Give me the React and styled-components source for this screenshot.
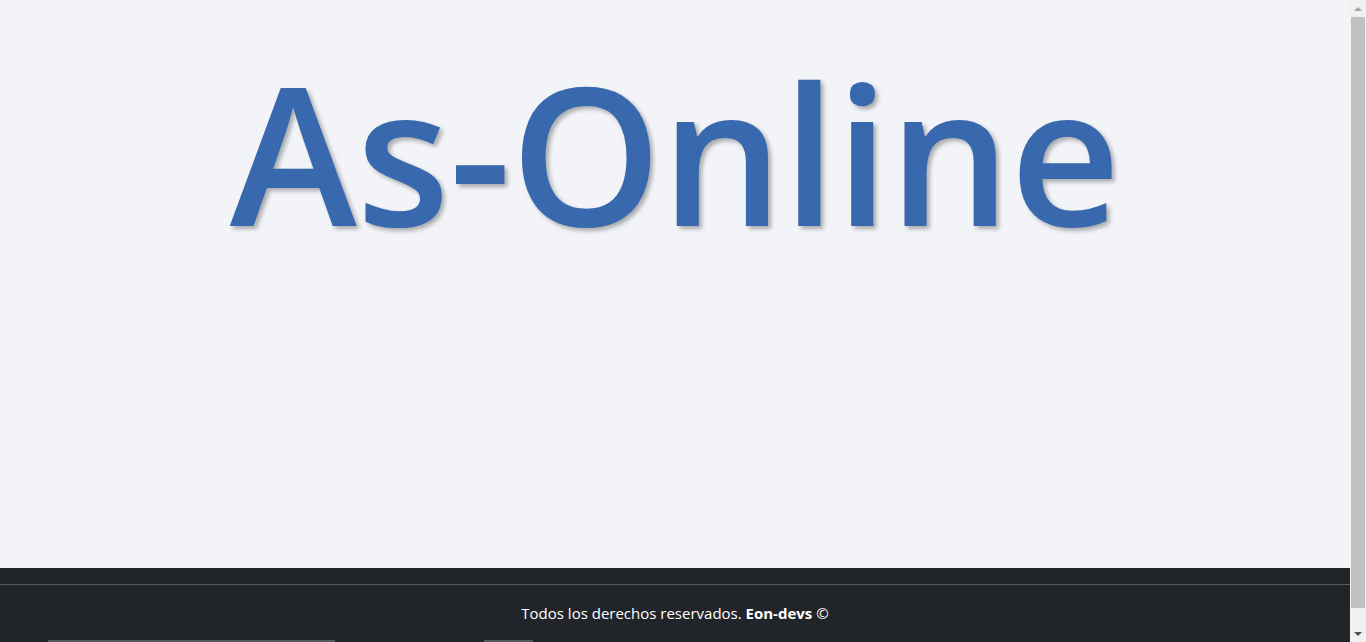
import React from "react";
import styled, { createGlobalStyle } from "styled-components";

const Global = createGlobalStyle`
  html, body { margin: 0; padding: 0; }
  body {
    background: #f3f4f8;
    font-family: "Open Sans", "Noto Sans", sans-serif;
  }
`;

const Page = styled.div`
  display: flex;
  flex-direction: column;
  min-height: 100vh;
  margin-right: 16px;
`;

const Main = styled.main`
  height: 568px;
  display: flex;
  justify-content: center;
  align-items: flex-start;
`;

const Title = styled.h1`
  margin: 56px 0 0;
  font-family: "Open Sans", "Noto Sans", sans-serif;
  font-weight: 600;
  font-size: 192px;
  line-height: 1;
  letter-spacing: -0.5px;
  color: #3869ae;
  text-shadow: 3px 3px 4px rgba(0, 0, 0, 0.3);
`;

const Footer = styled.footer`
  background: #212529;
  color: #ffffff;
  padding-top: 16px;
  display: flex;
  flex-direction: column;
`;

const Rule = styled.hr`
  margin: 0;
  border: 0;
  border-top: 1px solid #55585c;
`;

const Copy = styled.p`
  margin: 0;
  padding: 18px 0 0;
  text-align: center;
  font-size: 15px;
  line-height: 20px;
  color: #fff;
  b { font-weight: 700; }
`;

const Strip = styled.div`
  display: flex;
  padding: 17px 0 0 48px;
  gap: 149px;
  height: 20px;
`;

const StripItem = styled.div`
  width: ${(p) => p.$w}px;
  border-top: 2px solid #55585c;
`;

const ScrollRail = styled.div`
  position: fixed;
  top: 0;
  right: 0;
  width: 16px;
  height: 100vh;
  background: #f1f1f1;
  display: flex;
  flex-direction: column;
  align-items: center;
`;

const ScrollButton = styled.div`
  height: 17px;
  width: 16px;
  display: flex;
  align-items: center;
  justify-content: center;
  flex: none;
`;

const Arrow = styled.span`
  width: 0;
  height: 0;
  border-left: 4px solid transparent;
  border-right: 4px solid transparent;
  ${(p) =>
    p.$up
      ? `border-bottom: 4px solid #a3a3a3;`
      : `border-top: 4px solid #505050;`}
`;

const Thumb = styled.div`
  flex: 1;
  width: 14px;
  background: #c1c1c1;
  margin-bottom: 17px;
`;

export default function App() {
  return (
    <>
      <Global />
      <Page>
        <Main>
          <Title>As-Online</Title>
        </Main>
        <Footer>
          <Rule />
          <Copy>
            Todos los derechos reservados. <b>Eon-devs</b> ©
          </Copy>
          <Strip>
            <StripItem $w={287} />
            <StripItem $w={49} />
          </Strip>
        </Footer>
      </Page>
      <ScrollRail>
        <ScrollButton>
          <Arrow $up />
        </ScrollButton>
        <Thumb />
        <ScrollButton>
          <Arrow />
        </ScrollButton>
      </ScrollRail>
    </>
  );
}
